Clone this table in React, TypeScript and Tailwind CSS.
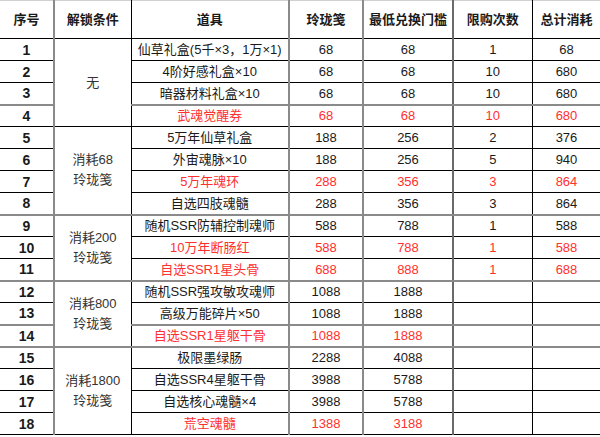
import React from 'react';

type Row = {
  no: number;
  item: string;
  price: string;
  min: string;
  limit: string;
  total: string;
  red?: boolean;
};

const rows: Row[] = [
  { no: 1, item: '仙草礼盒(5千×3，1万×1)', price: '68', min: '68', limit: '1', total: '68' },
  { no: 2, item: '4阶好感礼盒×10', price: '68', min: '68', limit: '10', total: '680' },
  { no: 3, item: '暗器材料礼盒×10', price: '68', min: '68', limit: '10', total: '680' },
  { no: 4, item: '武魂觉醒券', price: '68', min: '68', limit: '10', total: '680', red: true },
  { no: 5, item: '5万年仙草礼盒', price: '188', min: '256', limit: '2', total: '376' },
  { no: 6, item: '外宙魂脉×10', price: '188', min: '256', limit: '5', total: '940' },
  { no: 7, item: '5万年魂环', price: '288', min: '356', limit: '3', total: '864', red: true },
  { no: 8, item: '自选四肢魂髓', price: '288', min: '356', limit: '3', total: '864' },
  { no: 9, item: '随机SSR防辅控制魂师', price: '588', min: '788', limit: '1', total: '588' },
  { no: 10, item: '10万年断肠红', price: '588', min: '788', limit: '1', total: '588', red: true },
  { no: 11, item: '自选SSR1星头骨', price: '688', min: '888', limit: '1', total: '688', red: true },
  { no: 12, item: '随机SSR强攻敏攻魂师', price: '1088', min: '1888', limit: '', total: '' },
  { no: 13, item: '高级万能碎片×50', price: '1088', min: '1888', limit: '', total: '' },
  { no: 14, item: '自选SSR1星躯干骨', price: '1088', min: '1888', limit: '', total: '', red: true },
  { no: 15, item: '极限墨绿肠', price: '2288', min: '4088', limit: '', total: '' },
  { no: 16, item: '自选SSR4星躯干骨', price: '3988', min: '5788', limit: '', total: '' },
  { no: 17, item: '自选核心魂髓×4', price: '3988', min: '5788', limit: '', total: '' },
  { no: 18, item: '荒空魂髓', price: '1388', min: '3188', limit: '', total: '', red: true },
];

// rows that start a merged "解锁条件" group, with span and label
const groups: Record<number, { span: number; label: string[] }> = {
  1: { span: 4, label: ['无'] },
  5: { span: 4, label: ['消耗68', '玲珑笺'] },
  9: { span: 3, label: ['消耗200', '玲珑笺'] },
  12: { span: 3, label: ['消耗800', '玲珑笺'] },
  15: { span: 4, label: ['消耗1800', '玲珑笺'] },
};

// row numbers whose bottom edge is drawn as the heavier grey line
const greyBottom = new Set([3, 8, 11, 13, 14]);

export default function App() {
  return (
    <div
      className="w-[600px] h-[437px] overflow-hidden bg-white"
      style={{ fontFamily: '"Liberation Sans", "Noto Sans CJK SC", sans-serif' }}
    >
      <table className="w-[601px] table-fixed border-collapse text-[13px] text-[#1a1a1a]">
        <colgroup>
          <col className="w-[54px]" />
          <col className="w-[77px]" />
          <col className="w-[158px]" />
          <col className="w-[74px]" />
          <col className="w-[90px]" />
          <col className="w-[79px]" />
          <col className="w-[69px]" />
        </colgroup>
        <thead>
          <tr className="h-[38px] font-bold">
            <th className="border-t border-t-[#d0d0d0] border-b border-b-black border-r-2 border-r-[#8a8a8a]">序号</th>
            <th className="border-t border-t-[#d0d0d0] border-b border-b-black border-r border-r-black">解锁条件</th>
            <th className="border-t border-t-[#d0d0d0] border-b border-b-black border-r-2 border-r-[#8a8a8a]">道具</th>
            <th className="border-t border-t-[#d0d0d0] border-b border-b-black border-r-2 border-r-[#8a8a8a]">玲珑笺</th>
            <th className="border-t border-t-[#d0d0d0] border-b border-b-black border-r-2 border-r-[#6a6a6a]">最低兑换门槛</th>
            <th className="border-t border-t-[#d0d0d0] border-b border-b-black border-r border-r-black">限购次数</th>
            <th className="border-t border-t-[#d0d0d0] border-b border-b-black border-r border-r-black">总计消耗</th>
          </tr>
        </thead>
        <tbody>
          {rows.map((r) => {
            const grey = greyBottom.has(r.no);
            const bottom = grey ? 'border-b-2 border-b-[#8a8a8a]' : 'border-b border-b-black';
            const tone = r.red ? 'text-[#ff3030]' : '';
            const g = groups[r.no];
            const groupEnd = g ? r.no + g.span - 1 : 0;
            const groupBottom = g && greyBottom.has(groupEnd) ? 'border-b-2 border-b-[#8a8a8a]' : 'border-b border-b-black';
            return (
              <tr key={r.no} className="h-[22px] text-center leading-none">
                <td className={`${bottom} border-r-2 border-r-[#8a8a8a] font-bold text-[14px]`}>{r.no}</td>
                {g && (
                  <td rowSpan={g.span} className={`${groupBottom} border-r border-r-black text-[#333]`}>
                    {g.label.map((l) => (
                      <div key={l} className="leading-[20px]">{l}</div>
                    ))}
                  </td>
                )}
                <td className={`${bottom} border-r-2 border-r-[#8a8a8a] ${tone} whitespace-nowrap`}>{r.item}</td>
                <td className={`${bottom} border-r-2 border-r-[#8a8a8a] ${tone}`}>{r.price}</td>
                <td className={`${bottom} border-r-2 border-r-[#6a6a6a] ${tone}`}>{r.min}</td>
                <td className={`${bottom} border-r border-r-black ${tone}`}>{r.limit}</td>
                <td className={`${bottom} border-r border-r-black ${tone}`}>{r.total}</td>
              </tr>
            );
          })}
        </tbody>
      </table>
    </div>
  );
}
